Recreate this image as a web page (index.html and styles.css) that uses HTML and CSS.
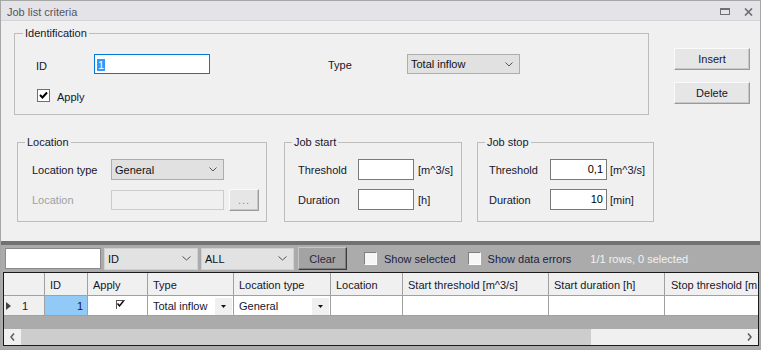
FILE: index.html
```html
<!DOCTYPE html>
<html lang="en">
<head>
  <meta charset="UTF-8">
  <title>Job list criteria</title>
  <link rel="stylesheet" href="styles.css">
</head>
<body>
  <div class="window">
    <!-- Title bar -->
    <div class="titlebar">
      <span class="title">Job list criteria</span>
      <span class="title-buttons">
        <svg width="10" height="7" viewBox="0 0 10 7"><rect x="0.5" y="0.5" width="9" height="6" fill="none" stroke="#707070"/><rect x="0" y="0" width="10" height="2" fill="#707070"/></svg>
        <svg width="9" height="8" viewBox="0 0 9 8"><path d="M1 0.5 L8 7.5 M8 0.5 L1 7.5" stroke="#707070" stroke-width="1.7"/></svg>
      </span>
    </div>

    <!-- Criteria form -->
    <div class="criteria">
      <div class="criteria-top">
        <fieldset class="group group-id">
          <legend>Identification</legend>
          <div class="id-row">
            <span class="lbl lbl-id">ID</span>
            <div class="field field-focus"><span class="selected-text">1</span></div>
            <span class="lbl lbl-type">Type</span>
            <div class="combo combo-type">
              <span>Total inflow</span>
              <svg width="8" height="5" viewBox="0 0 8 5"><polyline points="0.5,0.5 4,4 7.5,0.5" fill="none" stroke="#555" stroke-width="1"/></svg>
            </div>
          </div>
          <div class="apply-row">
            <span class="check">
              <svg width="11" height="11" viewBox="0 0 11 11"><polyline points="2,5 4.5,7.5 9,2.5" fill="none" stroke="#000" stroke-width="2"/></svg>
            </span>
            <span class="apply-label">Apply</span>
          </div>
        </fieldset>
        <div class="side-buttons">
          <button class="btn">Insert</button>
          <button class="btn">Delete</button>
        </div>
      </div>

      <div class="criteria-groups">
        <fieldset class="group group-location">
          <legend>Location</legend>
          <div class="loc-grid">
            <span class="lbl">Location type</span>
            <div class="combo combo-loc">
              <span>General</span>
              <svg width="8" height="5" viewBox="0 0 8 5"><polyline points="0.5,0.5 4,4 7.5,0.5" fill="none" stroke="#555" stroke-width="1"/></svg>
            </div>
            <span></span>
            <span class="lbl lbl-disabled">Location</span>
            <div class="field field-disabled"></div>
            <button class="btn btn-dots">...</button>
          </div>
        </fieldset>

        <fieldset class="group group-start">
          <legend>Job start</legend>
          <div class="job-grid">
            <span class="lbl">Threshold</span>
            <div class="field"></div>
            <span class="unit">[m^3/s]</span>
            <span class="lbl">Duration</span>
            <div class="field"></div>
            <span class="unit">[h]</span>
          </div>
        </fieldset>

        <fieldset class="group group-stop">
          <legend>Job stop</legend>
          <div class="job-grid job-grid-stop">
            <span class="lbl">Threshold</span>
            <div class="field field-num">0,1</div>
            <span class="unit">[m^3/s]</span>
            <span class="lbl">Duration</span>
            <div class="field field-num">10</div>
            <span class="unit">[min]</span>
          </div>
        </fieldset>
      </div>
    </div>

    <!-- Job list -->
    <div class="list-panel">
      <div class="toolbar">
        <div class="search"></div>
        <div class="tool-combo tool-combo-id">
          <span>ID</span>
          <svg width="9" height="5" viewBox="0 0 9 5"><polyline points="0.5,0.5 4.5,4 8.5,0.5" fill="none" stroke="#555" stroke-width="1"/></svg>
        </div>
        <div class="tool-combo tool-combo-all">
          <span>ALL</span>
          <svg width="9" height="5" viewBox="0 0 9 5"><polyline points="0.5,0.5 4.5,4 8.5,0.5" fill="none" stroke="#555" stroke-width="1"/></svg>
        </div>
        <button class="btn-clear">Clear</button>
        <span class="tool-check tool-check-first"></span>
        <span class="tool-label">Show selected</span>
        <span class="tool-check tool-check-second"></span>
        <span class="tool-label">Show data errors</span>
        <span class="row-count">1/1 rows, 0 selected</span>
      </div>

      <div class="grid">
        <div class="grid-row grid-head">
          <div class="cell"></div>
          <div class="cell">ID</div>
          <div class="cell">Apply</div>
          <div class="cell">Type</div>
          <div class="cell">Location type</div>
          <div class="cell">Location</div>
          <div class="cell">Start threshold [m^3/s]</div>
          <div class="cell">Start duration [h]</div>
          <div class="cell cell-last">Stop threshold [m</div>
        </div>
        <div class="grid-row grid-data">
          <div class="cell cell-rowhead">
            <svg width="5" height="8" viewBox="0 0 5 8"><polygon points="0,0 5,4 0,8" fill="#444"/></svg>
            <span>1</span>
          </div>
          <div class="cell cell-id">1</div>
          <div class="cell cell-check">
            <span class="grid-check">
              <svg width="9" height="9" viewBox="0 0 9 9"><polyline points="1.5,3.5 3.5,6 7.5,1" fill="none" stroke="#000" stroke-width="1.4"/></svg>
            </span>
          </div>
          <div class="cell cell-drop">
            <span>Total inflow</span>
            <span class="drop-btn"><svg width="5" height="3" viewBox="0 0 5 3"><polygon points="0,0 5,0 2.5,3" fill="#111"/></svg></span>
          </div>
          <div class="cell cell-drop">
            <span>General</span>
            <span class="drop-btn"><svg width="5" height="3" viewBox="0 0 5 3"><polygon points="0,0 5,0 2.5,3" fill="#111"/></svg></span>
          </div>
          <div class="cell"></div>
          <div class="cell"></div>
          <div class="cell"></div>
          <div class="cell cell-last"></div>
        </div>
        <div class="grid-empty"></div>
        <div class="hscroll">
          <span class="scroll-arrow">
            <svg width="5" height="8" viewBox="0 0 5 8"><polyline points="4,0.5 1,4 4,7.5" fill="none" stroke="#606060" stroke-width="1.6"/></svg>
          </span>
          <span class="scroll-thumb"></span>
          <span class="scroll-track"></span>
          <span class="scroll-arrow">
            <svg width="5" height="8" viewBox="0 0 5 8"><polyline points="1,0.5 4,4 1,7.5" fill="none" stroke="#606060" stroke-width="1.6"/></svg>
          </span>
        </div>
      </div>
    </div>
  </div>
</body>
</html>
```

FILE: styles.css
```css
* {
  box-sizing: border-box;
}

body {
  margin: 0;
  font-family: "Liberation Sans", Arial, sans-serif;
  font-size: 11px;
  color: #16162c;
  background-color: #fff;
}

.window {
  width: 761px;
  height: 350px;
  border: 1px solid #a6a6a6;
  background-color: #f0f0f0;
  display: flex;
  flex-direction: column;
  overflow: hidden;
}

/* Title bar */
.titlebar {
  flex: none;
  height: 20px;
  display: flex;
  align-items: center;
  justify-content: space-between;
  padding: 2px 7px 0 6px;
  background-color: #e3e3e8;
  border-bottom: 1px solid #d4d4d8;
}

.title {
  color: #555560;
  padding-top: 1px;
}

.title-buttons {
  display: flex;
  align-items: center;
  gap: 14px;
}

/* Criteria area */
.criteria {
  flex: none;
  height: 220px;
}

.criteria-top {
  display: flex;
  padding: 5px 0 0 13px;
}

.group {
  margin: 0;
  padding: 0;
  min-width: 0;
  border: 1px solid #bdbdbd;
}

.group legend {
  padding: 0 2px;
  margin-left: 7px;
  line-height: 14px;
}

.group-id {
  width: 635px;
  height: 89px;
  padding-top: 14px;
}

.group-id legend {
  margin-left: 8px;
}

.lbl {
  line-height: 14px;
}

.id-row {
  display: flex;
  align-items: center;
  height: 20px;
  padding-left: 21px;
}

.id-row .lbl {
  padding-top: 3px;
}

.id-row .lbl-type {
  padding-top: 1px;
}

.lbl-id {
  width: 58px;
}

.lbl-type {
  width: 79px;
  margin-left: 118px;
}

.field {
  height: 21px;
  border: 1px solid #7a7a7a;
  background-color: #fff;
}

.field-focus {
  width: 116px;
  height: 20px;
  border-color: #0078d7;
  padding: 4px 0 0 2px;
}

.selected-text {
  display: inline-block;
  background-color: #3399ff;
  color: #fff;
  line-height: 12px;
  padding: 0 1px;
}

.combo {
  display: flex;
  align-items: center;
  justify-content: space-between;
  height: 21px;
  padding: 0 6px 0 3px;
  background-color: #e1e1e1;
  border: 1px solid #adadad;
  color: #111;
}

.combo-type {
  width: 113px;
  height: 20px;
}

.apply-row {
  display: flex;
  align-items: flex-start;
  margin-top: 15px;
  padding-left: 22px;
}

.check {
  width: 13px;
  height: 13px;
  border: 1px solid #707070;
  background-color: #fff;
}

.check svg {
  display: block;
}

.apply-label {
  margin: 2px 0 0 7px;
  line-height: 13px;
}

.side-buttons {
  display: flex;
  flex-direction: column;
  gap: 12px;
  margin: 22px 0 0 25px;
}

.btn {
  width: 76px;
  height: 22px;
  padding: 0;
  font-family: inherit;
  font-size: 11px;
  color: #16162c;
  background-color: #e6e6e6;
  border: 1px solid;
  border-color: #fafafa #9a9a9a #9a9a9a #fafafa;
  box-shadow: inset -1px -1px 0 #c8c8c8;
}

/* Lower groups */
.criteria-groups {
  display: flex;
  margin-top: 20px;
  padding-left: 16px;
}

.group-location,
.group-start,
.group-stop {
  height: 87px;
  padding-top: 10px;
}

.group-location {
  width: 250px;
}

.group-start {
  width: 178px;
  margin-left: 17px;
}

.group-stop {
  width: 177px;
  margin-left: 15px;
}

.loc-grid {
  display: grid;
  grid-template-columns: 79px 113px 35px;
  grid-auto-rows: 21px;
  row-gap: 9px;
  align-items: center;
  padding-left: 14px;
}

.combo-loc {
  width: 113px;
}

.lbl-disabled {
  color: #a0a0a0;
}

.field-disabled {
  height: 20px;
  background-color: #f0f0f0;
  border-color: #cccccc;
}

.btn-dots {
  width: 30px;
  justify-self: end;
  color: #8a8a8a;
  letter-spacing: 1px;
}

.job-grid {
  display: grid;
  grid-template-columns: 60px 56px auto;
  grid-auto-rows: 21px;
  row-gap: 9px;
  align-items: center;
  padding-left: 13px;
}

.job-grid-stop {
  grid-template-columns: 61px 57px auto;
  padding-left: 11px;
}

.unit {
  margin-left: 4px;
}

.job-grid-stop .unit {
  margin-left: 3px;
}

.field-num {
  text-align: right;
  padding: 3px 3px 0 0;
  color: #000;
}

/* Job list panel */
.list-panel {
  flex: 1;
  background-color: #ababab;
  border-top: 4px solid #727272;
  display: flex;
  flex-direction: column;
}

.toolbar {
  flex: none;
  height: 27px;
  display: flex;
  align-items: center;
  padding-left: 4px;
}

.search {
  width: 96px;
  height: 21px;
  background-color: #fff;
  border: 1px solid #8a8a8a;
}

.tool-combo {
  display: flex;
  align-items: center;
  justify-content: space-between;
  height: 22px;
  margin-left: 3px;
  padding: 0 6px 0 3px;
  background-color: #e2e2e2;
  border: 1px solid #d0d0d0;
  color: #111;
}

.tool-combo-id {
  width: 94px;
}

.tool-combo-all {
  width: 93px;
}

.btn-clear {
  width: 49px;
  height: 23px;
  margin-left: 4px;
  padding: 0;
  font-family: inherit;
  font-size: 11px;
  color: #2a2a48;
  background-color: #a3a3a3;
  border: 1px solid;
  border-color: #c6c6c6 #3c3c3c #3c3c3c #c6c6c6;
  box-shadow: inset -1px -1px 0 #7d7d7d;
}

.tool-check {
  width: 13px;
  height: 13px;
  background-color: #f6f6f6;
  border: 1px solid;
  border-color: #7e7e7e #ffffff #ffffff #7e7e7e;
}

.tool-check-first {
  margin-left: 17px;
}

.tool-check-second {
  margin-left: 12px;
}

.tool-label {
  margin-left: 7px;
  color: #1c1c44;
}

.row-count {
  margin-left: 19px;
  color: #f2f2f2;
}

/* Grid */
.grid {
  width: 756px;
  height: 74px;
  margin-left: 2px;
  border: 1px solid #1a1a1a;
  overflow: hidden;
  display: flex;
  flex-direction: column;
}

.grid-row {
  display: grid;
  grid-template-columns: 41px 43px 60px 86px 97px 72px 146px 116px 100px;
  flex: none;
}

.cell {
  border-right: 1px solid #a0a0a0;
  border-bottom: 1px solid #a0a0a0;
  padding-left: 5px;
  white-space: nowrap;
  overflow: hidden;
}

.cell-last {
  border-right: none;
  padding-left: 6px;
}

.grid-head .cell {
  height: 23px;
  padding-top: 5px;
  line-height: 14px;
  background-color: #f0f0f0;
}

.grid-data .cell {
  height: 20px;
  display: flex;
  align-items: center;
  padding-top: 1px;
  background-color: #fff;
}

.grid-data .cell-rowhead {
  background-color: #f0f0f0;
  padding-left: 2px;
  gap: 11px;
}

.grid-data .cell-id {
  justify-content: flex-end;
  padding-right: 4px;
  background-color: #91c9f7;
}

.cell-check {
  justify-content: center;
}

.grid-check {
  width: 9px;
  height: 9px;
  margin-top: -3px;
  border-top: 1px solid #555;
  border-left: 1px solid #555;
}

.grid-check svg {
  display: block;
  margin: -1px 0 0 -1px;
}

.cell-drop {
  justify-content: space-between;
  padding-right: 1px;
}

.drop-btn {
  width: 17px;
  height: 17px;
  display: flex;
  align-items: center;
  justify-content: center;
  background-color: #f0f0f0;
}

.grid-empty {
  flex: none;
  height: 13px;
  background-color: #ababab;
}

.hscroll {
  flex: none;
  height: 16px;
  display: flex;
  background-color: #f0f0f0;
}

.scroll-arrow {
  width: 17px;
  display: flex;
  align-items: center;
  justify-content: center;
}

.scroll-thumb {
  width: 570px;
  background-color: #cdcdcd;
}

.scroll-track {
  flex: 1;
}
```
